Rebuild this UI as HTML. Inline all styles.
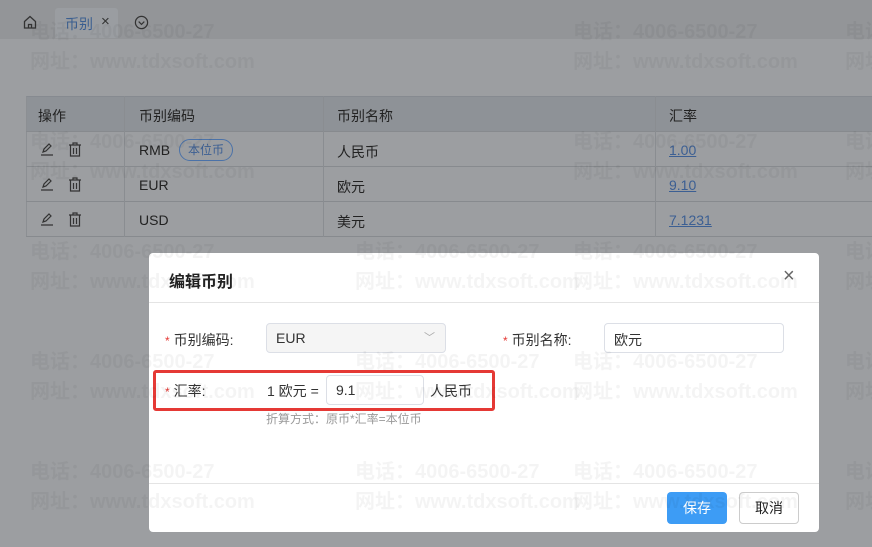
<!DOCTYPE html>
<html><head><meta charset="utf-8"><style>
*{box-sizing:border-box;margin:0;padding:0}
body{width:872px;height:547px;overflow:hidden;position:relative;background:#9c9ea1;font-family:"Liberation Sans","Noto Sans CJK SC",sans-serif;font-size:14px;color:#222}
.abs{position:absolute}
.tabbar{left:0;top:0;width:872px;height:39px;background:#939598}
.tab{left:55px;top:8px;width:63px;height:30px;background:#9a9da1;border-radius:3px 3px 0 0}
.table{left:26px;top:96px;width:846px;height:141px;border-top:1px solid #868a90;border-left:1px solid #8c8f93}
.hd{left:26px;top:96px;width:846px;height:35px;background:#8e9297;border-radius:4px 0 0 0}
.rowl{left:26px;width:846px;height:1px;background:#878a8e}
.coll{top:96px;width:1px;height:141px;background:#8a8d91}
.t{position:absolute;font-size:14px;color:#222;white-space:nowrap}
.link{color:#3c5f93;text-decoration:underline}
.wm{position:absolute;font-weight:bold;font-size:20px;color:rgba(0,0,0,0.045);white-space:nowrap;line-height:20px;z-index:5}
.modal{left:149px;top:253px;width:670px;height:279px;background:#fff;border-radius:4px}
.lbl{position:absolute;font-size:14px;color:#333}
.star{color:#e53935;font-size:12px;margin-right:4px}
.inp{position:absolute;border:1px solid #dcdfe6;border-radius:4px;height:30px;font-size:14px;padding:6px 9px;color:#333}
</style></head><body>
<div class="abs tabbar"></div>
<div class="abs tab"></div>
<svg class="abs" style="left:22px;top:14px" width="16" height="16" viewBox="0 0 16 16" fill="none" stroke="#333" stroke-width="1.3"><path d="M2.5 7.5L8 2.5l5.5 5V14h-11z"/><path d="M6.5 14v-3.5h3V14"/></svg>
<div class="t" style="left:65px;top:14px;color:#3b5f90">币别</div>
<div class="t" style="left:101px;top:13px;color:#333;font-size:15px">×</div>
<svg class="abs" style="left:134px;top:15px" width="15" height="15" viewBox="0 0 16 16" fill="none" stroke="#333" stroke-width="1.3"><circle cx="8" cy="8" r="6.5"/><path d="M5 7l3 3 3-3"/></svg>

<div class="abs hd"></div>
<div class="abs table"></div>
<div class="abs rowl" style="top:131px"></div>
<div class="abs rowl" style="top:166px"></div>
<div class="abs rowl" style="top:201px"></div>
<div class="abs rowl" style="top:236px"></div>
<div class="abs coll" style="left:124px"></div>
<div class="abs coll" style="left:323px"></div>
<div class="abs coll" style="left:655px"></div>
<div class="t" style="left:38px;top:106px">操作</div>
<div class="t" style="left:139px;top:106px">币别编码</div>
<div class="t" style="left:337px;top:106px">币别名称</div>
<div class="t" style="left:669px;top:106px">汇率</div>

<svg class="abs" style="left:40px;top:142px" width="14" height="14" viewBox="0 0 14 14" fill="none" stroke="#333" stroke-width="1.2"><path d="M3 10l1-3 5-5 2 2-5 5z M1 13h12"/></svg>
<svg class="abs" style="left:68px;top:142px" width="14" height="15" viewBox="0 0 14 15" fill="none" stroke="#333" stroke-width="1.2"><path d="M1 3h12M5 3V1h4v2M2.5 3v11h9V3M5.5 6v6M8.5 6v6"/></svg>
<svg class="abs" style="left:40px;top:177px" width="14" height="14" viewBox="0 0 14 14" fill="none" stroke="#333" stroke-width="1.2"><path d="M3 10l1-3 5-5 2 2-5 5z M1 13h12"/></svg>
<svg class="abs" style="left:68px;top:177px" width="14" height="15" viewBox="0 0 14 15" fill="none" stroke="#333" stroke-width="1.2"><path d="M1 3h12M5 3V1h4v2M2.5 3v11h9V3M5.5 6v6M8.5 6v6"/></svg>
<svg class="abs" style="left:40px;top:212px" width="14" height="14" viewBox="0 0 14 14" fill="none" stroke="#333" stroke-width="1.2"><path d="M3 10l1-3 5-5 2 2-5 5z M1 13h12"/></svg>
<svg class="abs" style="left:68px;top:212px" width="14" height="15" viewBox="0 0 14 15" fill="none" stroke="#333" stroke-width="1.2"><path d="M1 3h12M5 3V1h4v2M2.5 3v11h9V3M5.5 6v6M8.5 6v6"/></svg>

<div class="t" style="left:139px;top:142px">RMB</div>
<div class="abs" style="left:179px;top:139px;width:54px;height:22px;border:1px solid #4b72a8;border-radius:11px;color:#3c5f93;font-size:12px;text-align:center;line-height:20px">本位币</div>
<div class="t" style="left:139px;top:177px">EUR</div>
<div class="t" style="left:139px;top:212px">USD</div>
<div class="t" style="left:337px;top:142px">人民币</div>
<div class="t" style="left:337px;top:177px">欧元</div>
<div class="t" style="left:337px;top:212px">美元</div>
<div class="t link" style="left:669px;top:142px">1.00</div>
<div class="t link" style="left:669px;top:177px">9.10</div>
<div class="t link" style="left:669px;top:212px">7.1231</div>

<div class="abs modal">
  <div style="position:absolute;left:20px;top:15px;font-size:16px;font-weight:bold;color:#222">编辑币别</div>
  <div style="position:absolute;left:634px;top:12px;font-size:20px;color:#666">×</div>
  <div style="position:absolute;left:0;top:49px;width:670px;height:1px;background:#e4e4e4"></div>
  <div class="lbl" style="left:16px;top:77px"><span class="star">*</span>币别编码:</div>
  <div class="inp" style="left:117px;top:70px;width:180px;background:#f5f5f5">EUR<span style="position:absolute;right:10px;top:5px;color:#aaa;font-size:11px">﹀</span></div>
  <div class="lbl" style="left:354px;top:77px"><span class="star">*</span>币别名称:</div>
  <div class="inp" style="left:455px;top:70px;width:180px">欧元</div>
  <div class="lbl" style="left:16px;top:128px"><span class="star">*</span>汇率:</div>
  <div class="lbl" style="left:118px;top:128px">1 欧元 =</div>
  <div class="inp" style="left:177px;top:122px;width:98px">9.1</div>
  <div class="lbl" style="left:281px;top:128px">人民币</div>
  <div style="position:absolute;left:4px;top:117px;width:342px;height:41px;border:3px solid #e53935;border-radius:3px"></div>
  <div style="position:absolute;left:117px;top:157px;font-size:12px;color:#999">折算方式：原币*汇率=本位币</div>
  <div style="position:absolute;left:0;top:230px;width:670px;height:1px;background:#e4e4e4"></div>
  <div style="position:absolute;left:518px;top:239px;width:60px;height:32px;background:#3d9cf5;border-radius:4px;color:#fff;text-align:center;line-height:32px">保存</div>
  <div style="position:absolute;left:590px;top:239px;width:60px;height:32px;border:1px solid #ccc;border-radius:4px;color:#222;text-align:center;line-height:30px">取消</div>
</div>

<div class="wm" style="left:30px;top:22px">电话：4006-6500-27</div><div class="wm" style="left:30px;top:52px">网址：www.tdxsoft.com</div>
<div class="wm" style="left:573px;top:22px">电话：4006-6500-27</div><div class="wm" style="left:573px;top:52px">网址：www.tdxsoft.com</div>
<div class="wm" style="left:845px;top:22px">电话：4006-6500-27</div><div class="wm" style="left:845px;top:52px">网址：www.tdxsoft.com</div>
<div class="wm" style="left:30px;top:132px">电话：4006-6500-27</div><div class="wm" style="left:30px;top:162px">网址：www.tdxsoft.com</div>
<div class="wm" style="left:573px;top:132px">电话：4006-6500-27</div><div class="wm" style="left:573px;top:162px">网址：www.tdxsoft.com</div>
<div class="wm" style="left:845px;top:132px">电话：4006-6500-27</div><div class="wm" style="left:845px;top:162px">网址：www.tdxsoft.com</div>
<div class="wm" style="left:30px;top:242px">电话：4006-6500-27</div><div class="wm" style="left:30px;top:272px">网址：www.tdxsoft.com</div>
<div class="wm" style="left:355px;top:242px">电话：4006-6500-27</div><div class="wm" style="left:355px;top:272px">网址：www.tdxsoft.com</div>
<div class="wm" style="left:573px;top:242px">电话：4006-6500-27</div><div class="wm" style="left:573px;top:272px">网址：www.tdxsoft.com</div>
<div class="wm" style="left:845px;top:242px">电话：4006-6500-27</div><div class="wm" style="left:845px;top:272px">网址：www.tdxsoft.com</div>
<div class="wm" style="left:30px;top:352px">电话：4006-6500-27</div><div class="wm" style="left:30px;top:382px">网址：www.tdxsoft.com</div>
<div class="wm" style="left:355px;top:352px">电话：4006-6500-27</div><div class="wm" style="left:355px;top:382px">网址：www.tdxsoft.com</div>
<div class="wm" style="left:573px;top:352px">电话：4006-6500-27</div><div class="wm" style="left:573px;top:382px">网址：www.tdxsoft.com</div>
<div class="wm" style="left:845px;top:352px">电话：4006-6500-27</div><div class="wm" style="left:845px;top:382px">网址：www.tdxsoft.com</div>
<div class="wm" style="left:30px;top:462px">电话：4006-6500-27</div><div class="wm" style="left:30px;top:492px">网址：www.tdxsoft.com</div>
<div class="wm" style="left:355px;top:462px">电话：4006-6500-27</div><div class="wm" style="left:355px;top:492px">网址：www.tdxsoft.com</div>
<div class="wm" style="left:573px;top:462px">电话：4006-6500-27</div><div class="wm" style="left:573px;top:492px">网址：www.tdxsoft.com</div>
<div class="wm" style="left:845px;top:462px">电话：4006-6500-27</div><div class="wm" style="left:845px;top:492px">网址：www.tdxsoft.com</div>
</body></html>
